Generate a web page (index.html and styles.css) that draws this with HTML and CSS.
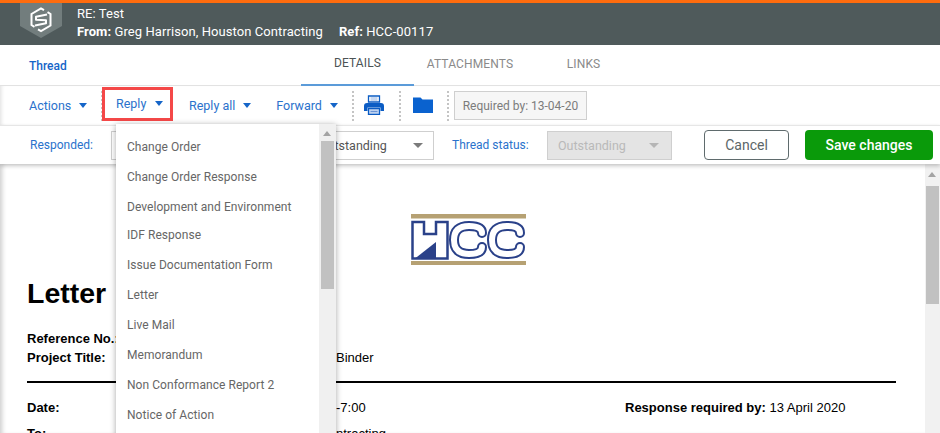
FILE: index.html
```html
<!DOCTYPE html>
<html lang="en">
<head>
<meta charset="utf-8">
<title>RE: Test</title>
<link rel="stylesheet" href="styles.css">
</head>
<body>
<div class="page">
  <header class="topbar">
    <div class="shield">
      <svg width="42" height="35" viewBox="0 0 42 35">
        <path d="M0 0H42V23L21 35L0 23Z" fill="#727d7d"/>
        <g fill="none" stroke="#fff" stroke-width="2" transform="translate(0 1)">
          <path d="M24 6.200L21 4.500L11.500 10V21L14.500 22.800"/>
          <path d="M18 25.300L21 27L30.500 21.500V10L27.500 8.200"/>
          <path d="M27 10.500L16 12.800V15.800L26 16.300V19.300L15 21.500" stroke-linejoin="round"/>
        </g>
      </svg>
    </div>
    <div class="topbar-text">
      <div>RE: Test</div>
      <div class="topbar-meta"><span><b>From:</b> Greg Harrison, Houston Contracting</span><span><b>Ref:</b> HCC-00117</span></div>
    </div>
  </header>

  <nav class="tabs">
    <a class="thread">Thread</a>
    <a class="tab tab-active">DETAILS</a>
    <a class="tab tab-attach">ATTACHMENTS</a>
    <a class="tab tab-links">LINKS</a>
  </nav>

  <div class="toolbar">
    <button class="tool tool-actions">Actions<i class="caret"></i></button>
    <span class="sep"></span>
    <button class="tool tool-reply">Reply<i class="caret"></i></button>
    <button class="tool tool-replyall">Reply all<i class="caret"></i></button>
    <button class="tool tool-forward">Forward<i class="caret"></i></button>
    <span class="sep sep-a"></span>
    <svg class="ic-print" width="20" height="20" viewBox="0 0 20 20">
      <path d="M4.500 1H15.500V7H4.500Z" fill="#fff" stroke="#0b5cc4" stroke-width="1.300"/>
      <path d="M6.500 3H13.500M6.500 5H13.500" stroke="#8fb2e3" stroke-width="1.200"/>
      <path d="M0 11Q0 8 3 8H17Q20 8 20 11V16H16.500V12.500H3.500V16H0Z" fill="#0b5cc4"/>
      <path d="M4.500 13.500H15.500V19.500H4.500Z" fill="#c6d7f2" stroke="#0b5cc4" stroke-width="1.300"/>
      <path d="M6.500 16.500H13.500" stroke="#6a94d6" stroke-width="1.200"/>
    </svg>
    <span class="sep sep-b"></span>
    <svg class="ic-folder" width="20" height="16" viewBox="0 0 20 16">
      <path d="M0 0.500H7.500L9.500 2.500H20V16H0Z" fill="#0a62cf"/>
    </svg>
    <span class="sep sep-c"></span>
    <div class="required">Required by: 13-04-20</div>
  </div>

  <div class="filters">
    <span class="flabel flabel-resp">Responded:</span>
    <div class="select select-resp"></div>
    <div class="select select-status"><span>Outstanding</span><i class="caret caret-gray"></i></div>
    <span class="flabel flabel-thread">Thread status:</span>
    <div class="select select-disabled"><span>Outstanding</span><i class="caret caret-light"></i></div>
    <button class="btn btn-cancel">Cancel</button>
    <button class="btn btn-save">Save changes</button>
  </div>

  <div class="body">
    <main class="doc">
      <div class="logo">
        <svg width="115" height="51" viewBox="0 0 115 51">
          <rect x="0" y="0" width="115" height="4.500" fill="#b6a173"/>
          <rect x="0" y="47" width="115" height="4.500" fill="#b6a173"/>
          <path d="M1.500 8H13V20H25V8H36.500V44.500H1.500Z" fill="#fff" stroke="#2a4189" stroke-width="2.500"/>
          <path d="M4 44.500L25 28V44.500Z" fill="#2a4189"/>
          <g fill="none" stroke-linecap="round">
            <path d="M71 19Q71 12 58 12Q43 12 43 26Q43 40 58 40Q71 40 71 33" stroke="#2a4189" stroke-width="10"/>
            <path d="M71 19Q71 12 58 12Q43 12 43 26Q43 40 58 40Q71 40 71 33" stroke="#fff" stroke-width="6"/>
            <path d="M109 19Q109 12 96 12Q81 12 81 26Q81 40 96 40Q109 40 109 33" stroke="#2a4189" stroke-width="10"/>
            <path d="M109 19Q109 12 96 12Q81 12 81 26Q81 40 96 40Q109 40 109 33" stroke="#fff" stroke-width="6"/>
          </g>
        </svg>
      </div>
      <h1 class="doc-title">Letter</h1>
      <dl class="doc-refs">
        <dt>Reference No.:</dt><dd></dd>
        <dt>Project Title:</dt><dd>Binder</dd>
      </dl>
      <hr class="doc-rule">
      <dl class="doc-meta">
        <dt>Date:</dt><dd>-7:00</dd><div class="doc-resp"><b>Response required by:</b> 13 April 2020</div>
        <dt>To:</dt><dd>ntracting</dd><div></div>
      </dl>
    </main>
    <div class="vscroll">
      <i class="arrow-up"></i>
      <div class="vthumb"></div>
    </div>
  </div>

  <div class="menu">
    <ul class="menu-list">
      <li>Change Order</li>
      <li>Change Order Response</li>
      <li>Development and Environment</li>
      <li class="short">IDF Response</li>
      <li>Issue Documentation Form</li>
      <li>Letter</li>
      <li>Live Mail</li>
      <li>Memorandum</li>
      <li>Non Conformance Report 2</li>
      <li>Notice of Action</li>
    </ul>
    <div class="menu-scroll">
      <i class="arrow-up arrow-menu"></i>
      <div class="menu-thumb"></div>
    </div>
  </div>
</div>
</body>
</html>
```
FILE: styles.css
```css
* { box-sizing: border-box; }
html, body { margin: 0; height: 100%; overflow: hidden; background: #fff; }
.page { position: relative; width: 940px; height: 433px; overflow: hidden; font-family: Roboto, "Liberation Sans", sans-serif; font-size: 13px; display: flex; flex-direction: column; }
b { font-weight: 700; }
button { font-family: inherit; background: none; border: 0; padding: 0; cursor: pointer; }

.topbar { flex: 0 0 45px; display: flex; background: #4f5a5b; border-top: 3px solid #ff6c0e; color: #fff; padding-left: 20px; }
.shield { width: 42px; height: 35px; }
.shield svg { display: block; }
.topbar-text { margin-left: 15px; padding-top: 2px; line-height: 18px; font-size: 13px; letter-spacing: .08px; }
.topbar-meta { display: flex; gap: 16px; }

.tabs { flex: 0 0 41px; display: flex; align-items: stretch; border-bottom: 1px solid #e2e2e2; font-size: 12px; padding-left: 29px; }
.thread { color: #1565c8; font-weight: 500; font-size: 12px; align-self: center; padding-top: 1px; width: 272px; }
.tab { display: flex; align-items: center; justify-content: center; padding-bottom: 3px; color: #8a8a8a; letter-spacing: .15px; }
.tab-active { width: 113px; color: #4c5355; border-bottom: 2px solid #5b9bd9; margin-bottom: -1px; }
.tab-attach { width: 84px; margin-left: 14px; }
.tab-links { width: 33px; margin-left: 55px; }

.toolbar { flex: 0 0 39px; display: flex; align-items: center; padding-left: 29px; position: relative; box-shadow: inset 4px 0 4px -3px #ddd; }
.tool { display: flex; align-items: center; color: #2a72cc; font-size: 12.500px; height: 34px; }
.caret { display: inline-block; width: 0; height: 0; border-left: 4.500px solid transparent; border-right: 4.500px solid transparent; border-top: 5px solid #1565c8; margin-left: 8px; }
.tool-actions { width: 72px; }
.sep { width: 0; height: 30px; border-left: 2px dotted #c4c4c4; }
.tool-reply { border: 3px solid #f44848; width: 71px; padding-left: 11px; margin-left: -1px; margin-top: -4px; position: relative; background: #fff; }
.tool-reply .caret { margin-left: 9px; }
.tool-replyall { margin-left: 16px; }
.tool-forward { margin-left: 25px; }
.sep-a { margin-left: 14px; }
.ic-print { margin-left: 10px; margin-top: -2px; }
.sep-b { margin-left: 15px; }
.ic-folder { margin-left: 12px; margin-top: -2px; }
.sep-c { margin-left: 14px; }
.required { margin-left: 5px; height: 29px; width: 133px; display: flex; align-items: center; justify-content: center; background: #f6f6f6; border: 1px solid #cfcfcf; color: #7c7c7c; font-size: 12px; }

.filters { flex: 0 0 39px; display: flex; align-items: center; padding-left: 30px; position: relative; z-index: 2; background: #fff; border-top: 1px solid #e6e6e6; box-shadow: 0 2px 4px rgba(0,0,0,.22); }
.flabel { color: #2a72cc; font-size: 12px; }
.flabel-resp { width: 81px; }
.select { height: 29px; border: 1px solid #cfcfcf; display: flex; align-items: center; justify-content: space-between; color: #555; font-size: 12.500px; }
.select-resp { width: 150px; }
.select-status { width: 214px; margin-left: -41px; padding: 0 10px 0 98px; }
.caret-gray { border-top-color: #7b7b7b; border-left-width: 5px; border-right-width: 5px; }
.flabel-thread { margin-left: 18px; width: 95px; }
.select-disabled { width: 125px; height: 29px; background: #e4e4e4; color: #b9b9b9; padding: 0 12px 0 10px; }
.caret-light { border-top-color: #b5b5b5; border-left-width: 5px; border-right-width: 5px; }
.btn { height: 30px; border-radius: 4px; font-size: 14px; }
.btn-cancel { width: 85px; margin-left: 32px; color: #5c6668; border: 1px solid #5f6b6d; background: #fff; }
.btn-save { width: 128px; margin-left: 16px; background: #0a9a0a; color: #fff; font-weight: 500; }

.body { flex: 1; display: flex; min-height: 0; }
.doc { flex: 1; padding: 50px 29px 0 27px; font-family: "Liberation Sans", Arial, sans-serif; font-size: 13px; color: #000; box-shadow: inset 5px 0 5px -3px #ccc; overflow: hidden; }
.logo { padding-left: 384px; height: 51px; }
.logo svg { display: block; }
.doc-title { margin: 11px 0 0; font-size: 28.500px; line-height: 34px; font-weight: 700; }
.doc-refs { display: grid; grid-template-columns: 309px 1fr; margin: 19px 0 0; line-height: 19px; }
dt { font-weight: 700; }
dd { margin: 0; }
.doc-rule { margin: 14px 0 0; border: 0; border-top: 2px solid #000; width: 869px; }
.doc-meta { display: grid; grid-template-columns: 309px 289px 1fr; row-gap: 10px; margin: 17px 0 0; line-height: 16px; }
.doc-resp { white-space: nowrap; }

.vscroll { flex: 0 0 15px; background: #f1f1f1; position: relative; padding: 22px 1px 0; }
.vthumb { height: 118px; background: #c1c1c1; }
.arrow-up { position: absolute; top: 8px; left: 3px; width: 0; height: 0; border-left: 4.500px solid transparent; border-right: 4.500px solid transparent; border-bottom: 5px solid #a3a3a3; }

.menu { position: absolute; z-index: 5; left: 116px; top: 124px; width: 220px; height: 320px; display: flex; background: #fff; box-shadow: 0 1px 6px rgba(0,0,0,.35); }
.menu-list { flex: 1; list-style: none; margin: 0; padding: 8px 0 0 11px; color: #666; font-size: 12px; letter-spacing: .05px; }
.menu-list li { height: 30px; line-height: 31px; white-space: nowrap; }
.menu-list .short { margin-top: -2px; }
.menu-scroll { flex: 0 0 17px; background: #f0f0f0; position: relative; padding: 17px 2px 0; }
.menu-thumb { height: 148px; background: #c1c1c1; }
.arrow-menu { top: 7px; left: 4px; }
```
